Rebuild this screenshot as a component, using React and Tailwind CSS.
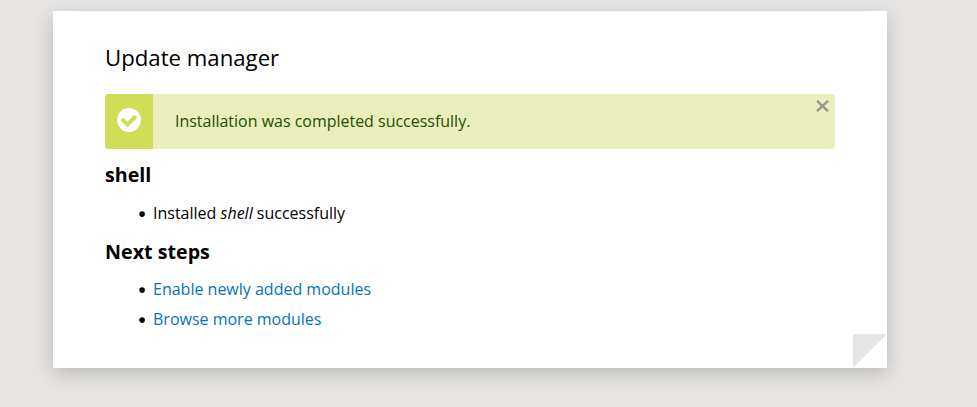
const links = [
  { title: "Enable newly added modules", href: "#modules" },
  { title: "Browse more modules", href: "#browse" }
];

function CheckCircle({ className }) {
  return (
    <svg className={className} viewBox="128 128 1536 1536" fill="currentColor">
      <path d="M1412 734q0-28-18-46l-91-90q-19-19-45-19t-45 19l-408 407-226-226q-19-19-45-19t-45 19l-91 90q-18 18-18 46 0 27 18 45l362 362q19 19 45 19 27 0 46-19l543-543q18-18 18-45zm252 162q0 209-103 385.5t-279.5 279.5-385.5 103-385.5-103-279.5-279.5-103-385.5 103-385.5 279.5-279.5 385.5-103 385.5 103 279.5 279.5 103 385.5z" />
    </svg>
  );
}

function StatusMessage({ children }) {
  return (
    <div className="relative flex h-[55px] overflow-hidden rounded bg-[#e9eebb]">
      <div className="flex w-12 justify-center bg-[#d0dd57] pt-3.5">
        <CheckCircle className="h-6 w-6 text-white" />
      </div>
      <p className="pl-[22px] text-[15.97px] leading-[54px] text-[#264d00]">{children}</p>
      <button aria-label="Dismiss" className="absolute top-1.5 right-1.5 text-[#999]">
        <svg className="h-3 w-[13px]" viewBox="0 0 13 12" fill="none" stroke="currentColor" strokeWidth="2.4">
          <path d="M1 .8 12 11.2M12 .8 1 11.2" />
        </svg>
      </button>
    </div>
  );
}

function BulletItem({ children }) {
  return (
    <li className="flex items-center">
      <svg className="mt-0.5 mr-2 h-1.5 w-1.5" viewBox="0 0 6 6">
        <circle cx="3.1" cy="3.1" r="2.8" />
      </svg>
      <p>{children}</p>
    </li>
  );
}

export default function App() {
  return (
    <div className="min-h-screen bg-[#e6e5e3] pt-[11px] pl-[53px] font-['Open_Sans','Noto_Sans',sans-serif] text-base text-black">
      <main className="relative h-[357px] w-[834px] bg-white px-[52px] pt-[31px] shadow-[0_6px_18px_rgba(0,0,0,0.19)]">
        <h1 className="mb-[21px] text-[22.2px] leading-[31px]">Update manager</h1>

        <StatusMessage>Installation was completed successfully.</StatusMessage>

        <h3 className="mt-3 text-[19.7px] leading-7 font-bold">shell</h3>
        <ul className="mt-3 pl-[34px] leading-6">
          <BulletItem>Installed <em>shell</em> successfully</BulletItem>
        </ul>

        <h3 className="mt-[13px] text-[19.7px] leading-7 font-bold">Next steps</h3>
        <ul className="mt-[11px] space-y-1.5 pl-[34px] leading-6">
          {links.map((link) => (
            <BulletItem key={link.title}>
              <a href={link.href} className="text-[#0074bd]">{link.title}</a>
            </BulletItem>
          ))}
        </ul>

        {/* Folded page corner */}
        <svg className="absolute right-0 bottom-0 h-[34px] w-[34px]" viewBox="0 0 34 34">
          <path d="M0 0h34L0 34z" fill="#e6e5e3" />
        </svg>
      </main>
    </div>
  );
}
